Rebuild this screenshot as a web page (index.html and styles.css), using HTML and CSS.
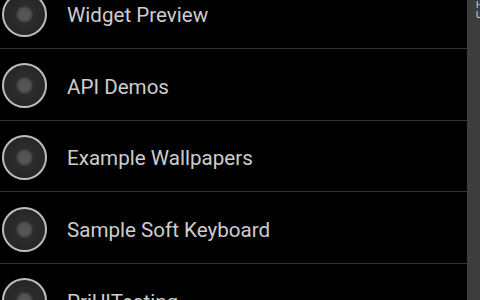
FILE: index.html
```html
<!DOCTYPE html>
<html lang="en">
  <head>
    <meta charset="UTF-8" />
    <meta name="viewport" content="width=device-width, initial-scale=1.0" />
    <title>Apps</title>
    <link rel="stylesheet" href="styles.css">
  </head>
  <body>
    <div class="screen">
      <ul class="app-list">
        <li class="app-row"><span class="app-icon"></span><span class="app-name">Widget Preview</span></li>
        <li class="app-row"><span class="app-icon"></span><span class="app-name">API Demos</span></li>
        <li class="app-row"><span class="app-icon"></span><span class="app-name">Example Wallpapers</span></li>
        <li class="app-row"><span class="app-icon"></span><span class="app-name">Sample Soft Keyboard</span></li>
        <li class="app-row"><span class="app-icon"></span><span class="app-name">PriUITesting</span></li>
      </ul>
      <div class="side-panel">
        <span>Hi</span>
        <span>Us</span>
      </div>
    </div>
  </body>
</html>
```
FILE: styles.css
```css
body {
  margin: 0;
  background-color: #000;
  font-family: Roboto, "Liberation Sans", sans-serif;
}
.screen {
  width: 480px;
  height: 300px;
  display: flex;
  overflow: hidden;
}
.app-list {
  flex: 1;
  list-style: none;
  margin: -22.67px 0 0 0;
  padding: 0;
}
.app-row {
  box-sizing: border-box;
  height: 71.67px;
  display: flex;
  align-items: center;
  border-bottom: 1px solid #333;
  padding-top: 3px;
}
.app-icon {
  box-sizing: border-box;
  width: 45px;
  height: 45px;
  margin-left: 2px;
  border: 2px solid #bcbcbc;
  border-radius: 50%;
  background: radial-gradient(circle, #585858 0, #525252 6px, #2c2c2c 9px, #222 100%);
}
.app-name {
  margin-left: 20px;
  padding-top: 2px;
  font-size: 20.6px;
  color: #cdcdcd;
}
.side-panel {
  width: 13px;
  background-color: #3d3d3d;
  display: flex;
  flex-direction: column;
  padding: 0 0 0 9px;
  box-sizing: border-box;
  overflow: hidden;
  font-size: 9px;
  line-height: 10px;
  color: #ddd;
}
```
